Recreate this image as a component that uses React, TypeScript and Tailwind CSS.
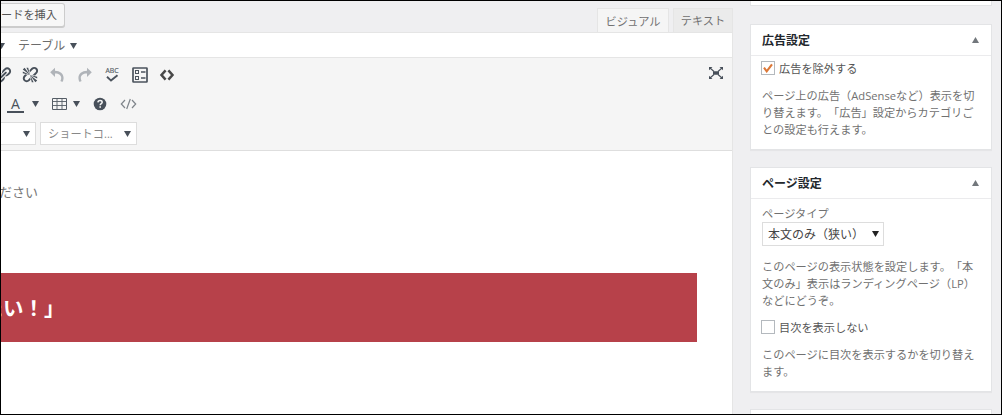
import React from 'react';

const LINK =
  'M17.74 2.76c1.68 1.69 1.68 4.41 0 6.1l-1.53 1.52c-1.12 1.12-2.7 1.47-4.14 1.09l2.62-2.61.76-.77.76-.76c.84-.84.84-2.2 0-3.04-.84-.85-2.2-.85-3.04 0l-.77.76-3.38 3.38c-.37-1.44-.02-3.02 1.1-4.14l1.52-1.53c1.69-1.68 4.42-1.68 6.1 0zM8.59 13.43l5.34-5.34c.42-.42.42-1.1 0-1.52-.44-.43-1.13-.39-1.53 0l-5.33 5.34c-.42.42-.42 1.1 0 1.52.44.43 1.13.39 1.52 0zm-.76 2.29l4.14-4.15c.38 1.44.03 3.02-1.09 4.14l-1.52 1.53c-1.69 1.68-4.41 1.68-6.1 0-1.68-1.68-1.68-4.42 0-6.1l1.53-1.52c1.12-1.12 2.7-1.47 4.14-1.1l-4.14 4.15c-.85.84-.85 2.2 0 3.05.84.84 2.2.84 3.04 0z';
const UNLINK =
  'M17.74 2.26c1.68 1.69 1.68 4.41 0 6.1l-1.53 1.52c-.32.33-.69.58-1.08.77L13 10l1.69-1.64.76-.77.76-.76c.84-.84.84-2.2 0-3.04-.84-.85-2.2-.85-3.04 0l-.77.76-.76.76L10 7l-.65-2.14c.19-.38.44-.75.77-1.07l1.52-1.53c1.69-1.68 4.42-1.68 6.1 0zM2 4l8 6-6-8zm4-2l4 8-2-8H6zM2 6l8 4-8-2V6zm7.36 7.69L10 13l.74 2.35-1.38 1.39c-1.69 1.68-4.41 1.68-6.1 0-1.68-1.68-1.68-4.42 0-6.1l1.39-1.38L7 10l-.69.64-1.52 1.53c-.85.84-.85 2.2 0 3.04.84.85 2.2.85 3.04 0zM18 16l-8-6 6 8zm-4 2l-4-8 2 8h2zm4-4l-8-4 8 2v2z';

function Cell({ children }: { children: React.ReactNode }) {
  return <span className="flex h-[18px] w-[27.4px] shrink-0 items-center justify-center">{children}</span>;
}

function Caret({ className = '' }: { className?: string }) {
  return (
    <svg viewBox="0 0 7 6" className={`h-[6px] w-[7px] shrink-0 ${className}`}>
      <path d="M0 0h7L3.5 6z" fill="currentColor" />
    </svg>
  );
}

function Arrow({ flip = false }: { flip?: boolean }) {
  return (
    <svg viewBox="0 0 16 16" className={`h-4 w-4 text-[#b0b4b9] ${flip ? '-scale-x-100' : ''}`}>
      <path d="M1.200 5.300L6 .8v3c5 0 8.600 3 8.600 7.200 0 1.500-.4 2.900-1.200 4.100l-2-1.200c.5-.9.800-1.800.8-2.900 0-2.700-2.200-4.500-6.200-4.500v3.400z" fill="currentColor" />
    </svg>
  );
}

function SpellCheck() {
  return (
    <svg viewBox="0 0 16 18" className="h-[18px] w-4">
      <text x="8" y="7" textAnchor="middle" textLength="13" lengthAdjust="spacingAndGlyphs" fontSize="8" fontFamily="Open Sans, sans-serif" fill="#555d66" stroke="#555d66" strokeWidth=".2">ABC</text>
      <path d="M3 10.800l4 3.800 6.500-5.400" fill="none" stroke="#4b535d" strokeWidth="1.900" />
    </svg>
  );
}

function FormIcon() {
  return (
    <svg viewBox="0 0 16 16" className="h-4 w-4" fill="none" stroke="#4b535d">
      <rect x="1" y="1" width="14" height="14" rx=".5" strokeWidth="1.700" />
      <rect x="3.500" y="3.500" width="3" height="3" />
      <rect x="3.500" y="9.500" width="3" height="3" />
      <path d="M9 5h4.500M9 11h4.500" strokeWidth="1.400" />
    </svg>
  );
}

function CodeIcon() {
  return (
    <svg viewBox="0 0 16 14" className="h-[14px] w-4" fill="none" stroke="#484848" strokeWidth="2.500">
      <path d="M6.600 2.400L2.500 7l4.100 4.600M9.400 2.400L13.500 7l-4.100 4.600" />
    </svg>
  );
}

function TableIcon() {
  return (
    <svg viewBox="0 0 15 14" className="h-[14px] w-[15px] shrink-0" fill="none" stroke="#555d66">
      <path d="M.5 1.500h14v11H.5z" />
      <path d="M.5 4.500h14M.5 8.500h14M5 1.500v11M10 1.500v11" strokeWidth=".9" />
    </svg>
  );
}

function HelpIcon() {
  return (
    <svg viewBox="0 0 14 14" className="h-[14px] w-[14px] shrink-0">
      <circle cx="7" cy="7" r="6.300" fill="#48505a" />
      <path d="M4.900 5.400c.1-1.300 1-1.900 2.200-1.900 1.200 0 2.100.7 2.100 1.700 0 1.400-2 1.500-2 3.100" fill="none" stroke="#f5f5f5" strokeWidth="1.500" />
      <path d="M6.400 9.300H8v1.500H6.400z" fill="#f5f5f5" />
    </svg>
  );
}

function SourceIcon() {
  return (
    <svg viewBox="0 0 17 12" className="h-3 w-[17px] shrink-0" fill="none" stroke="#7e848a" strokeWidth="1.200">
      <path d="M5 2L1.300 6 5 10M12 2l3.700 4L12 10M10.300 1L6.700 11" />
    </svg>
  );
}

function FullscreenIcon() {
  return (
    <svg viewBox="0 0 16 14" className="h-[14px] w-4">
      <g fill="#48505a">
        <path d="M5 5.200h6v3.600H5zM1 1h3.500L1 4.200zM15 1h-3.500L15 4.200zM1 13h3.500L1 9.800zM15 13h-3.500L15 9.800z" />
      </g>
      <path d="M2 2l4 3.500M14 2l-4 3.500M2 12l4-3.500M14 12l-4-3.500" stroke="#48505a" strokeWidth="1.100" />
    </svg>
  );
}

function Panel({ title, children, className }: { title: string; children: React.ReactNode; className: string }) {
  return (
    <section className={`flex shrink-0 flex-col border border-[#e3e4e6] bg-white shadow-[0_1px_1px_rgba(0,0,0,0.04)] ${className}`}>
      <header className="flex h-[31px] shrink-0 items-center justify-between border-b border-[#ebebed] pl-[11px] pr-[12px]">
        <h2 className="pt-[2px] text-[12px] font-bold leading-[18px] text-[#23282d]">{title}</h2>
        <Caret className="rotate-180 text-[#72777c]" />
      </header>
      <div className="flex flex-col pl-[11px]">{children}</div>
    </section>
  );
}

function Check({ label, checked = false }: { label: string; checked?: boolean }) {
  return (
    <label className="-ml-px flex h-[17px] items-center gap-[4px] whitespace-nowrap text-[#555]">
      <span className="mb-px flex h-[14px] w-[14px] items-center justify-center border border-[#b4b9be] bg-white">
        {checked && (
          <svg viewBox="0 0 10 10" className="h-[10px] w-[10px]">
            <path d="M1 4.700l2.700 3.600L9 1.300" fill="none" stroke="#dc7838" strokeWidth="2.100" />
          </svg>
        )}
      </span>
      {label}
    </label>
  );
}

export default function App() {
  return (
    <div className="flex h-[415px] w-[1002px] overflow-hidden border border-black bg-[#efeff1] font-['Open_Sans','Noto_Sans_CJK_JP',sans-serif] text-[11.2px] leading-[17px] text-[#717171] [text-spacing-trim:space-all]">
      <main className="flex w-[732px] shrink-0 flex-col overflow-hidden">
        <div className="flex h-[31px] shrink-0 items-end justify-between">
          <button className="mb-[5px] flex h-[24px] w-[64px] items-center whitespace-nowrap rounded-r-[3px] border border-l-0 border-[#ccc] bg-[#f7f7f7] pb-px text-[#555] shadow-[0_1px_0_#ccc]">
            ードを挿入
          </button>
          <div className="flex gap-[4px]">
            <div className="-mb-px flex h-[25px] w-[72px] items-center justify-center border border-b-0 border-[#e5e5e5] bg-[#f5f5f5]">ビジュアル</div>
            <div className="flex h-[24px] w-[60px] items-center justify-center border border-b-0 border-[#e5e5e5] bg-[#ebebeb]">テキスト</div>
          </div>
        </div>
        <div className="flex min-h-0 grow flex-col border-r border-t border-[#e5e5e5] bg-white">
          <div className="flex h-[25px] shrink-0 items-center border-b border-[#e5e5e5] pt-px text-[12px] text-[#6c6c6c]">
            <Caret className="-ml-[3px] text-[#48505a]" />
            <span className="ml-[13px]">テーブル</span>
            <Caret className="ml-[5px] text-[#48505a]" />
          </div>
          <div className="flex h-[93px] shrink-0 flex-col border-b border-[#dedede] bg-[#f5f5f5] text-[#48505a]">
            <div className="mt-[8px] flex h-[18px] items-center justify-between">
              <div className="-ml-[12px] flex">
                <Cell><svg viewBox="0 0 20 20" className="h-[18px] w-[18px]"><path d={LINK} fill="#48505a" /></svg></Cell>
                <Cell><svg viewBox="0 0 20 20" className="h-[18px] w-[18px]"><path d={UNLINK} fill="#48505a" /></svg></Cell>
                <Cell><Arrow /></Cell>
                <Cell><Arrow flip /></Cell>
                <Cell><SpellCheck /></Cell>
                <Cell><FormIcon /></Cell>
                <Cell><CodeIcon /></Cell>
              </div>
              <div className="mr-[8px] -mt-[4px]"><FullscreenIcon /></div>
            </div>
            <div className="mt-[11px] flex h-[18px] items-center pl-[6px]">
              <span className="mt-[2px] flex h-[16px] w-[17px] items-center justify-center border-b-[2px] border-[#48505a] text-[14px] leading-[14px]">A</span>
              <Caret className="ml-[8px]" />
              <span className="ml-[13px] flex"><TableIcon /></span>
              <Caret className="ml-[6px]" />
              <span className="ml-[13px] flex"><HelpIcon /></span>
              <span className="ml-[13px] flex"><SourceIcon /></span>
            </div>
            <div className="mt-[9px] flex h-[23px] gap-[4px]">
              <div className="flex w-[35px] items-center justify-end border border-l-0 border-[#ddd] bg-white pr-[5px]"><Caret /></div>
              <div className="flex w-[97px] items-center justify-between border border-[#ddd] bg-white pl-[7px] pr-[5px] text-[#888]">
                <span>ショートコ...</span>
                <Caret className="text-[#48505a]" />
              </div>
            </div>
          </div>
          <div className="flex grow flex-col">
            <p className="-ml-[2px] mt-[31px] h-[20px] text-[13px] leading-[20px] text-[#777]">ださい</p>
            <div className="mt-[71px] flex h-[69px] w-[696px] items-center overflow-hidden bg-[#b7414a]">
              <h1 className="-ml-[18.5px] whitespace-nowrap text-[20.5px] font-bold leading-[30px] text-white">たい！」</h1>
            </div>
          </div>
        </div>
      </main>
      <aside className="ml-[17px] flex w-[242px] shrink-0 flex-col overflow-hidden">
        <div className="h-[5px] shrink-0 border border-t-0 border-[#e3e4e6] bg-white" />
        <Panel title="広告設定" className="mt-[18px] h-[126px]">
          <div className="mt-[4px]"><Check label="広告を除外する" checked /></div>
          <p className="mt-[10px] whitespace-nowrap">
            ページ上の広告（AdSenseなど）表示を切<br />り替えます。「広告」設定からカテゴリご<br />との設定も行えます。
          </p>
        </Panel>
        <Panel title="ページ設定" className="mt-[17px] h-[225px]">
          <span className="mt-[6px]">ページタイプ</span>
          <div className="flex h-[24px] w-[122px] items-center justify-between border border-[#ddd] bg-white pl-[5px] pr-[4px] text-[12px] text-[#444]">
            <span className="whitespace-nowrap">本文のみ（狭い）</span>
            <Caret className="-ml-2 text-[#222]" />
          </div>
          <p className="mt-[12px] whitespace-nowrap">
            このページの表示状態を設定します。「本<br />文のみ」表示はランディングページ（LP）<br />などにどうぞ。
          </p>
          <div className="mt-[10px]"><Check label="目次を表示しない" /></div>
          <p className="mt-[10px] whitespace-nowrap">
            このページに目次を表示するかを切り替え<br />ます。
          </p>
        </Panel>
        <div className="mt-[17px] h-[8px] shrink-0 border border-b-0 border-[#e3e4e6] bg-white" />
      </aside>
    </div>
  );
}
